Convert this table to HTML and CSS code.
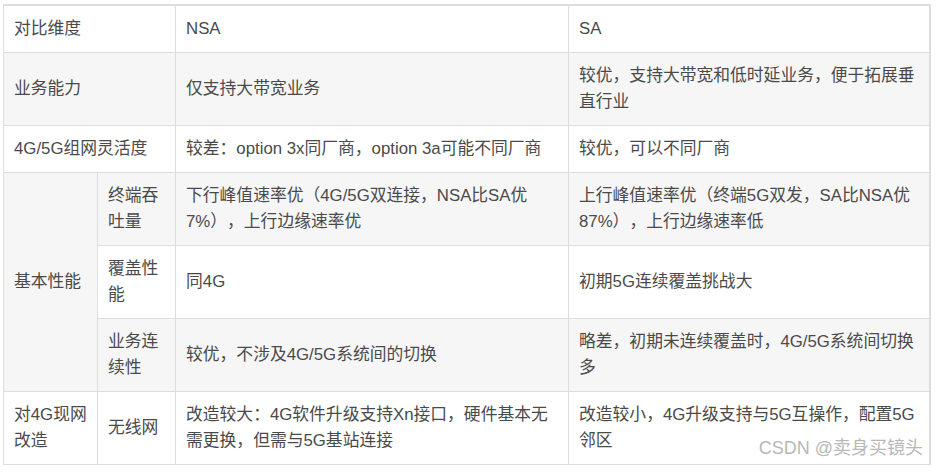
FILE: index.html
```html
<!DOCTYPE html>
<html lang="zh-CN">
<head>
<meta charset="utf-8">
<link rel="stylesheet" href="styles.css">
</head>
<body>
<div class="wrap">
<table class="cmp">
  <colgroup>
    <col class="c1"><col class="c2"><col class="c3"><col class="c4">
  </colgroup>
  <tr class="odd">
    <td colspan="2">对比维度</td><td>NSA</td><td>SA</td>
  </tr>
  <tr class="even">
    <td colspan="2">业务能力</td><td>仅支持大带宽业务</td><td>较优，支持大带宽和低时延业务，便于拓展垂直行业</td>
  </tr>
  <tr class="odd">
    <td colspan="2">4G/5G组网灵活度</td><td>较差：option 3x同厂商，option 3a可能不同厂商</td><td>较优，可以不同厂商</td>
  </tr>
  <tr class="even">
    <td rowspan="3">基本性能</td><td>终端吞吐量</td><td>下行峰值速率优（4G/5G双连接，NSA比SA优7%），上行边缘速率优</td><td>上行峰值速率优（终端5G双发，SA比NSA优87%），上行边缘速率低</td>
  </tr>
  <tr class="odd">
    <td>覆盖性能</td><td>同4G</td><td>初期5G连续覆盖挑战大</td>
  </tr>
  <tr class="even">
    <td>业务连续性</td><td>较优，不涉及4G/5G系统间的切换</td><td>略差，初期未连续覆盖时，4G/5G系统间切换多</td>
  </tr>
  <tr class="odd">
    <td>对4G现网改造</td><td>无线网</td><td>改造较大：4G软件升级支持Xn接口，硬件基本无需更换，但需与5G基站连接</td><td>改造较小，4G升级支持与5G互操作，配置5G邻区</td>
  </tr>
</table>
<div class="mark">CSDN @卖身买镜头</div>
</div>
</body>
</html>
```

FILE: styles.css
```css
html, body {
  margin: 0;
  padding: 0;
  background: #ffffff;
}
.wrap {
  position: relative;
  margin: 4px 0 0 3px;
  width: 926px;
}
.cmp {
  width: 926px;
  table-layout: fixed;
  border-collapse: collapse;
  font-family: "Liberation Sans", "Noto Sans CJK SC", sans-serif;
  font-size: 16.8px;
  line-height: 26px;
  color: #4a4a4a;
  border: 1px solid #dddddd;
  border-top-width: 2px;
  border-right-width: 2px;
  text-spacing-trim: space-all;
}
.c1 { width: 94px; }
.c2 { width: 78px; }
.c3 { width: 393px; }
.c4 { width: 361px; }
.cmp td {
  border: 1px solid #dddddd;
  padding: 10px 10px;
  vertical-align: middle;
}
.odd { background: #ffffff; }
.even { background: #f6f6f6; }
.mark {
  position: absolute;
  right: 6px;
  bottom: 6px;
  font-family: "Liberation Sans", "Noto Sans CJK SC", sans-serif;
  font-size: 18px;
  line-height: 22px;
  color: #b8b8b8;
  white-space: nowrap;
}
```
